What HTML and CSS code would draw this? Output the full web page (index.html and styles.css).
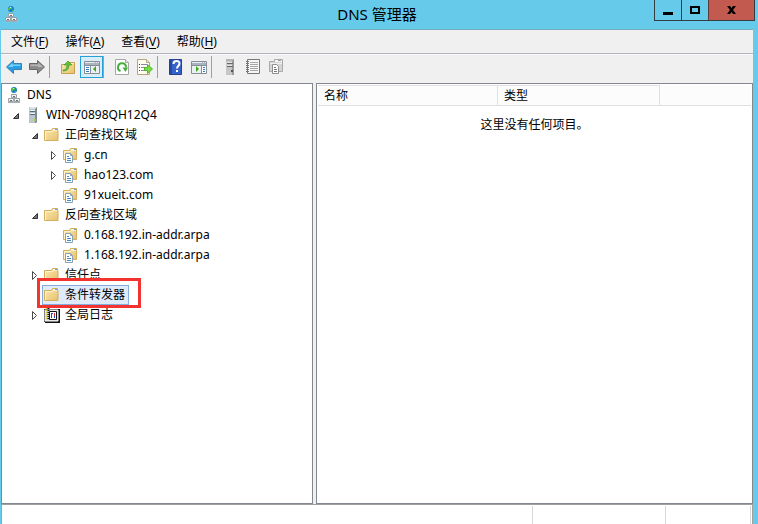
FILE: index.html
```html
<!DOCTYPE html>
<html lang="zh-CN">
<head>
    <meta charset="UTF-8">
    <title>DNS 管理器</title>
    <link rel="stylesheet" href="styles.css">
</head>
<body>
    <!-- 图标 -->
    <svg class="sprite" aria-hidden="true">
        <linearGradient id="gold" x1="0" y1="0" x2="1" y2="1">
            <stop offset="0" stop-color="#fbeab5"/>
            <stop offset="1" stop-color="#e6c06c"/>
        </linearGradient>
        <symbol id="dns" viewBox="0 0 16 16">
            <circle cx="8" cy="3" r="3" fill="#1c7fc4"/>
            <path d="M6 1h3v2H7v1H5V3zM9 4h2v1H9z" fill="#4fc04f"/>
            <path d="M7 1h1v1H7z" fill="#c9efff"/>
            <path d="M5.500 7.500h5v3h-5zM2.500 11.500h5v3h-5zM8.500 11.500h5v3h-5z" fill="#f4f5f6" stroke="#9a9fa4"/>
            <path d="M7 9.500h2M4 13.500h2M10 13.500h2" stroke="#6d7276"/>
            <path d="M2 15.500h12" stroke="#a9aeb2"/>
        </symbol>
        <symbol id="server" viewBox="0 0 16 16">
            <path d="M4 1l1-1h7v15l-1 1H4z" fill="#7d8b93"/>
            <path d="M4 2h6v14H4z" fill="#b9c6cc"/>
            <path d="M4 2l1-2h7l-2 2z" fill="#dce4e7"/>
            <path d="M5 4.500h5M5 7.500h5" stroke="#526a77"/>
            <path d="M5 3.500h5M5 6.500h5" stroke="#eef6f8"/>
            <path d="M9 12h2v2H9z" fill="#9bd322"/>
        </symbol>
        <symbol id="folder" viewBox="0 0 16 16">
            <path d="M.500 3.500h7l1-2h5v2h.500v10H.500z" fill="url(#gold)" stroke="#d3ae5c"/>
            <path d="M9 2h4v1H9z" fill="#fffdf0"/>
            <path d="M11 2.500h2" stroke="#529ed8"/>
            <path d="M1.500 13V4.500h7l1-1H13" stroke="#fff3cb" fill="none"/>
        </symbol>
        <symbol id="zone" viewBox="0 0 16 16">
            <path d="M.500 3.500h6l1-2h6v11H.500z" fill="url(#gold)" stroke="#d3ae5c"/>
            <path d="M8 2h5v1H8z" fill="#fffdf0"/>
            <path d="M11 2.500h2" stroke="#529ed8"/>
            <path d="M1.500 12V4.500h6l1-1H13" stroke="#fff3cb" fill="none"/>
            <path d="M2.500 6.500h5l2 2v7h-7z" fill="#fff" stroke="#8ba0b5"/>
            <path d="M7.500 6.500v2h2" stroke="#8ba0b5" fill="none"/>
            <path d="M4 9.500h2M4 11.500h4M4 13.500h4" stroke="#4b8bc4"/>
        </symbol>
        <symbol id="log" viewBox="0 0 16 16">
            <path d="M1 2h15v14H1z" fill="#111"/>
            <path d="M.500 2.500h14v12H.500z" fill="#d0d0d0" stroke="#111"/>
            <path d="M1 3h13v11H1z" fill="none" stroke="#fff"/>
            <path d="M2.500 1v12" stroke="#e8dd23" stroke-width="2" stroke-dasharray="1 1"/>
            <path d="M4.500 1v12" stroke="#111" stroke-width="2" stroke-dasharray="1 1"/>
            <path d="M5.500 4.500h7v8h-7z" fill="#fff" stroke="#111"/>
            <path d="M7.500 6v5M7 6.500h2" stroke="#254bc9"/>
            <path d="M10.500 6v3" stroke="#d02d39"/>
            <path d="M10.500 9v2" stroke="#254bc9"/>
        </symbol>
        <symbol id="back" viewBox="0 0 16 16">
            <path d="M.500 8L7.500 1.500v3H15.500v6h-8v4z" fill="#279de4" stroke="#387fb0"/>
            <path d="M2 8l4.500-4v1.500h8V7H7v1z" fill="#76d1fa"/>
        </symbol>
        <symbol id="forward" viewBox="0 0 16 16">
            <path d="M15.500 8L8.500 1.500v3H.500v6h8v4z" fill="#8c8c8c" stroke="#666"/>
            <path d="M14 8L9.500 4v1.500h-8V7H9v1z" fill="#b7b7b7"/>
        </symbol>
        <symbol id="up" viewBox="0 0 16 16">
            <path d="M1.500 5.500h7v-2h6v11h-13z" fill="url(#gold)" stroke="#c8a14e"/>
            <path d="M10 4.500h4" stroke="#fff1c5"/>
            <path d="M3 11c3 0 4-2 4-5H4l4-4 4 4H9c0 4-2 6-6 6z" fill="#62bf2d" stroke="#39972c" stroke-width=".600"/>
        </symbol>
        <symbol id="tree" viewBox="0 0 16 16">
            <path d="M.500 2.500h15v12H.500z" fill="#fff" stroke="#858d96"/>
            <path d="M1 3h14v3H1z" fill="#aab4c1"/>
            <path d="M1 3.500h10M12 3.500h1M14 3.500h1" stroke="#e9edf2"/>
            <path d="M1 6.500h14M6.500 7v7" stroke="#858d96"/>
            <path d="M2 8.500h3M2 10.500h3M2 12.500h3" stroke="#3679bf"/>
            <path d="M7 7h8v7H7z" fill="#edf0f3"/>
            <path d="M12 7v6l-3-3z" fill="#39aa1c"/>
        </symbol>
        <symbol id="refresh" viewBox="0 0 16 16">
            <path d="M1.500.500h10l3 3v12h-13z" fill="#fff" stroke="#a6a6a6"/>
            <path d="M11.500.500v3h3" fill="#e8e8e8" stroke="#a6a6a6"/>
            <path d="M6.500 12A4 4 0 1 1 12 8.500" fill="none" stroke="#45ae3d" stroke-width="2"/>
            <path d="M8.500 8.500H14L11.500 13z" fill="#45ae3d"/>
        </symbol>
        <symbol id="export" viewBox="0 0 16 16">
            <path d="M.500.500h9l3 3v12H.500z" fill="#fffdf2" stroke="#b4a77e"/>
            <path d="M9.500.500v3h3" fill="#eee3bd" stroke="#b4a77e"/>
            <path d="M2 5.500h1M2 8.500h1M2 11.500h1" stroke="#444"/>
            <path d="M4 5.500h6M4 8.500h5M4 11.500h6" stroke="#888baf"/>
            <path d="M7.500 8.500h3v-3l5 4.500-5 4.500v-3h-3z" fill="#7bdc45" stroke="#4bb52b"/>
        </symbol>
        <symbol id="help" viewBox="0 0 16 16">
            <path d="M1.500.500h12v15h-12z" fill="#3864ca" stroke="#263f91"/>
            <path d="M2 1h2v14H2z" fill="#284aa5"/>
            <path d="M5.500 5c0-4 6-4 6-.500C11.500 7 9 7 9 9.500" fill="none" stroke="#fff" stroke-width="2"/>
            <path d="M8 11h2v2H8z" fill="#fff"/>
        </symbol>
        <symbol id="action" viewBox="0 0 16 16">
            <path d="M.500 2.500h15v12H.500z" fill="#fff" stroke="#858d96"/>
            <path d="M1 3h14v3H1z" fill="#aab4c1"/>
            <path d="M1 3.500h10M12 3.500h1M14 3.500h1" stroke="#e9edf2"/>
            <path d="M1 7h9v7H1z" fill="#edf0f3"/>
            <path d="M1 6.500h14M10.500 7v7" stroke="#858d96"/>
            <path d="M12 8.500h2M12 10.500h2M12 12.500h2" stroke="#3679bf"/>
            <path d="M5 7v6l3-3z" fill="#39aa1c"/>
        </symbol>
        <symbol id="server-grey" viewBox="0 0 16 16">
            <path d="M4 0h8v16H4z" fill="#9a9a9a"/>
            <path d="M4 2h6v14H4z" fill="#c6c6c6"/>
            <path d="M4 0h8l-2 2H4z" fill="#b5b5b5"/>
            <path d="M5 4.500h6M5 7.500h6" stroke="#666"/>
            <path d="M5 3.500h5M5 6.500h5" stroke="#e5e5e5"/>
            <path d="M9 11h2v2H9z" fill="#555"/>
        </symbol>
        <symbol id="list" viewBox="0 0 16 16">
            <path d="M2.500.500h12v14h-12z" fill="#f6f6f6" stroke="#777"/>
            <path d="M5 3.500h8M5 5.500h8M5 7.500h8M5 9.500h8M5 11.500h8" stroke="#a6a6a6"/>
            <path d="M1 2.500h3M1 4.500h3M1 6.500h3M1 8.500h3M1 10.500h3M1 12.500h3" stroke="#777"/>
        </symbol>
        <symbol id="zone-grey" viewBox="0 0 16 16">
            <path d="M1.500 2.500h5v-2h8v12h-13z" fill="#d5d5d5" stroke="#aaa"/>
            <path d="M7 1h7v2H7z" fill="#f5f5f5"/>
            <path d="M10 1.500h3" stroke="#999"/>
            <path d="M2 4.500h12" stroke="#eee"/>
            <path d="M4.500 5.500h4l2 2v7h-6z" fill="#fff" stroke="#8e8e8e"/>
            <path d="M6 8.500h2M6 10.500h3M6 12.500h3" stroke="#777"/>
        </symbol>
        <symbol id="open" viewBox="0 0 9 9"><path d="M7.500 2.500v5h-5z" fill="#777" stroke="#333"/></symbol>
        <symbol id="closed" viewBox="0 0 9 9"><path d="M2.500.500v8l4-4z" fill="#fff" stroke="#4a4a4a"/></symbol>
    </svg>

    <div class="window">
        <header class="titlebar">
            <svg class="icon"><use href="#dns"/></svg>
            <h1>DNS 管理器</h1>
            <div class="controls">
                <button class="minimize" aria-label="最小化"><svg width="10" height="9"><path d="M0 6h10v3H0z"/></svg></button>
                <button class="maximize" aria-label="最大化"><svg width="10" height="8"><path d="M0 0h10v8H0zM2 2v4h6V2z" fill-rule="evenodd"/></svg></button>
                <button class="close" aria-label="关闭"><svg width="9" height="8"><path d="M0 0h3l1.500 2L6 0h3L6 4l3 4H6L4.500 6 3 8H0l3-4z"/></svg></button>
            </div>
        </header>

        <nav class="menubar">
            <button>文件(<u>F</u>)</button>
            <button>操作(<u>A</u>)</button>
            <button>查看(<u>V</u>)</button>
            <button>帮助(<u>H</u>)</button>
        </nav>

        <div class="toolbar">
            <button aria-label="后退"><svg class="icon"><use href="#back"/></svg></button>
            <button aria-label="前进"><svg class="icon"><use href="#forward"/></svg></button>
            <span class="separator"></span>
            <button aria-label="向上"><svg class="icon"><use href="#up"/></svg></button>
            <button class="active" aria-label="显示控制台树"><svg class="icon"><use href="#tree"/></svg></button>
            <span class="separator"></span>
            <button aria-label="刷新"><svg class="icon"><use href="#refresh"/></svg></button>
            <button aria-label="导出列表"><svg class="icon"><use href="#export"/></svg></button>
            <span class="separator"></span>
            <button aria-label="帮助"><svg class="icon"><use href="#help"/></svg></button>
            <button aria-label="显示操作窗格"><svg class="icon"><use href="#action"/></svg></button>
            <span class="separator"></span>
            <button aria-label="新建服务器"><svg class="icon"><use href="#server-grey"/></svg></button>
            <button aria-label="记录"><svg class="icon"><use href="#list"/></svg></button>
            <button aria-label="新建区域"><svg class="icon"><use href="#zone-grey"/></svg></button>
        </div>

        <main class="panes">
            <!-- 控制台树 -->
            <div class="tree-pane">
                <div class="row root"><span class="node"><svg class="icon"><use href="#dns"/></svg>DNS</span></div>
                <ul class="tree">
                    <li>
                        <div class="row"><button class="twist" aria-label="折叠"><svg><use href="#open"/></svg></button><span class="node"><svg class="icon"><use href="#server"/></svg>WIN-70898QH12Q4</span></div>
                        <ul>
                            <li>
                                <div class="row"><button class="twist" aria-label="折叠"><svg><use href="#open"/></svg></button><span class="node"><svg class="icon"><use href="#folder"/></svg>正向查找区域</span></div>
                                <ul>
                                    <li class="row"><button class="twist" aria-label="展开"><svg><use href="#closed"/></svg></button><span class="node"><svg class="icon"><use href="#zone"/></svg>g.cn</span></li>
                                    <li class="row"><button class="twist" aria-label="展开"><svg><use href="#closed"/></svg></button><span class="node"><svg class="icon"><use href="#zone"/></svg>hao123.com</span></li>
                                    <li class="row leaf"><span class="node"><svg class="icon"><use href="#zone"/></svg>91xueit.com</span></li>
                                </ul>
                            </li>
                            <li>
                                <div class="row"><button class="twist" aria-label="折叠"><svg><use href="#open"/></svg></button><span class="node"><svg class="icon"><use href="#folder"/></svg>反向查找区域</span></div>
                                <ul>
                                    <li class="row leaf"><span class="node"><svg class="icon"><use href="#zone"/></svg>0.168.192.in-addr.arpa</span></li>
                                    <li class="row leaf"><span class="node"><svg class="icon"><use href="#zone"/></svg>1.168.192.in-addr.arpa</span></li>
                                </ul>
                            </li>
                            <li class="row"><button class="twist" aria-label="展开"><svg><use href="#closed"/></svg></button><span class="node"><svg class="icon"><use href="#folder"/></svg>信任点</span></li>
                            <li class="row leaf"><span class="node selected"><svg class="icon"><use href="#folder"/></svg>条件转发器<span class="marker"></span></span></li>
                            <li class="row"><button class="twist" aria-label="展开"><svg><use href="#closed"/></svg></button><span class="node"><svg class="icon"><use href="#log"/></svg>全局日志</span></li>
                        </ul>
                    </li>
                </ul>
            </div>

            <!-- 结果列表 -->
            <div class="list-pane">
                <table>
                    <colgroup><col class="col-name"><col class="col-type"><col></colgroup>
                    <thead>
                        <tr><th>名称</th><th>类型</th><td></td></tr>
                    </thead>
                    <tbody>
                        <tr><td class="empty" colspan="3">这里没有任何项目。</td></tr>
                    </tbody>
                </table>
            </div>
        </main>

        <footer class="statusbar">
            <span class="status-main"></span>
            <span class="status-info"></span>
            <span class="status-end"></span>
        </footer>
    </div>
</body>
</html>
```
FILE: styles.css
```css
* {
    box-sizing: border-box;
}

body {
    margin: 0;
    font-family: "Noto Sans", "Noto Sans CJK SC", sans-serif;
    font-size: 12px;
    line-height: 20px;
    color: #000;
}

button {
    margin: 0;
    padding: 0;
    border: none;
    background: none;
    font: inherit;
    color: inherit;
}

ul {
    margin: 0;
    padding: 0;
    list-style: none;
}

.sprite {
    position: absolute;
    width: 0;
    height: 0;
}

.icon {
    width: 16px;
    height: 16px;
    flex: none;
}

.window {
    display: flex;
    flex-direction: column;
    height: 100vh;
    padding: 0 5px 0 1px;
    background: #66caea;
}

/* title bar */
.titlebar {
    display: grid;
    grid-template-columns: 1fr auto 1fr;
    height: 30px;
    border-bottom: 1px solid #74adc1;
}

.titlebar .icon {
    margin: 6px 0 0 2px;
}

h1 {
    margin: 0;
    font-size: 15px;
    font-weight: normal;
    line-height: 29px;
}

.controls {
    display: flex;
    justify-self: end;
    height: 21px;
    margin-right: -2px;
    border: 1px solid #333d42;
    border-top: none;
}

.controls button {
    display: flex;
    align-items: center;
    justify-content: center;
    width: 27px;
}

.controls .maximize {
    width: 27px;
    border-left: 1px solid #333d42;
}

.controls .close {
    width: 46px;
    border-left: 1px solid #5e3a38;
    background: #c35a50;
}

.controls .minimize {
    width: 26px;
}

/* menu and toolbar */
.menubar {
    display: flex;
    gap: 1px;
    height: 24px;
    padding-left: 2px;
    background: #f0f0f0;
    border-bottom: 1px solid #b1b4bf;
}

.menubar button {
    padding: 0 8px;
}

.menubar u {
    text-underline-offset: 2px;
}

.toolbar {
    display: flex;
    height: 29px;
    padding: 1px 2px 5px;
    background: #f0f0f0;
    border-top: 1px solid #fafafa;
}

.toolbar button {
    display: flex;
    align-items: center;
    justify-content: center;
    width: 23px;
    padding: 0 1px 0 0;
}

.toolbar .active {
    padding: 0;
    border: 1px solid #26a0da;
    background: #d9edf8;
}

.separator {
    width: 1px;
    margin-right: 7px;
    background: #a0a0a0;
}

/* panes */
.panes {
    display: grid;
    grid-template-columns: 312px 1fr;
    gap: 3px;
    flex: 1;
    min-height: 0;
    background: #f0f0f0;
}

.tree-pane,
.list-pane {
    border: 1px solid #828790;
    background: #fff;
    padding: 1px;
}

.tree-pane {
    padding-left: 2px;
}

.row {
    display: flex;
    height: 20px;
}

.tree ul {
    padding-left: 19px;
}

.twist {
    display: flex;
    align-items: center;
    justify-content: center;
    width: 19px;
    padding-left: 3px;
}

.twist svg {
    width: 9px;
    height: 9px;
}

.leaf {
    padding-left: 19px;
}

.node {
    display: flex;
    align-items: center;
    gap: 5px;
    height: 20px;
    padding: 0 4px 0 2px;
    white-space: nowrap;
}

.selected {
    position: relative;
    background: #dfebfa;
    box-shadow: inset 0 0 0 1px #84acdd;
}

/* red frame round the selected node */
.marker {
    position: absolute;
    inset: -7px -12px -3px -5px;
    border: 3px solid #f23330;
}

table {
    width: 100%;
    table-layout: fixed;
    border-collapse: separate;
    border-spacing: 0;
}

.col-name {
    width: 180px;
}

.col-type {
    width: 162px;
}

th,
td {
    height: 21px;
    padding: 0;
}

thead th,
thead td {
    background: #fcfcfc;
    border-bottom: 1px solid #e0e0e0;
}

th {
    padding-left: 6px;
    border-top: 1px solid #e0e0e0;
    border-right: 1px solid #e0e0e0;
    font-weight: normal;
    line-height: 19px;
    text-align: left;
}

.empty {
    height: 38px;
    text-align: center;
}

/* status bar */
.statusbar {
    display: flex;
    height: 20px;
    padding: 1px 1px 0 0;
    background: #fff;
    border: 1px solid #a0a0a0;
    border-bottom: none;
}

.statusbar span {
    border-right: 1px solid #d7d7d7;
}

.status-main {
    flex: 1;
}

.status-info {
    width: 133px;
}

.status-end {
    width: 85px;
}
```
